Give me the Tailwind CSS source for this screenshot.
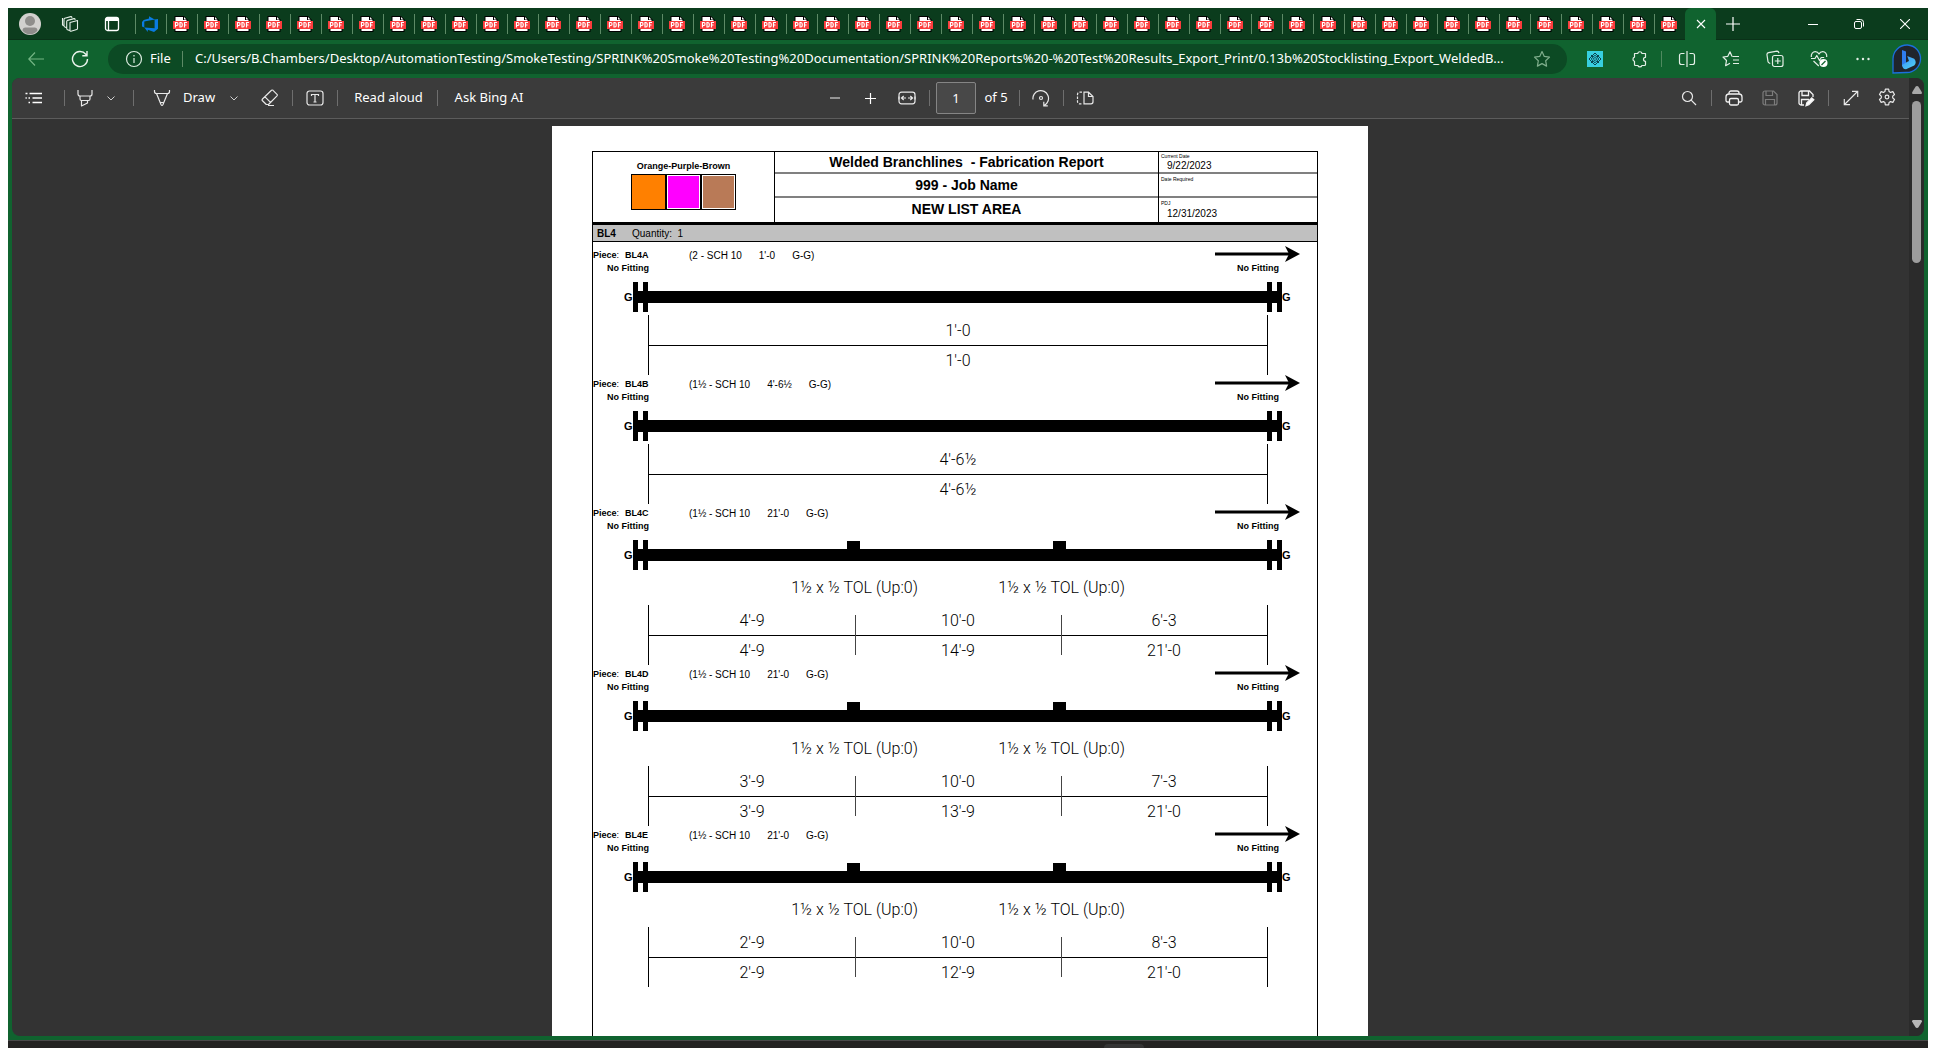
<!DOCTYPE html>
<html lang="en">
<head>
<meta charset="utf-8">
<title>Stocklisting_Export_Welded</title>
<script src="https://cdn.jsdelivr.net/npm/@tailwindcss/browser@4"></script>
</head>
<body class="bg-white font-['Noto_Sans',sans-serif] text-white">
<div class="flex h-screen flex-col overflow-hidden px-2 pt-2">

  <!-- Tab strip -->
  <header class="flex h-8 shrink-0 items-stretch border-b border-[#0a3118] bg-[#0b3c1d]">
    <div class="flex w-[127px] shrink-0 items-center pl-[11px]">
      <button aria-label="Profile" class="w-[22px]">
        <svg viewBox="0 0 22 22" class="size-[22px]"><circle cx="11" cy="11" r="11" fill="#d2d0ce"/><circle cx="11" cy="8" r="5" fill="#8f8d8b"/><path d="M3.5 17.5c0-2 1.200-3 3-3h9c1.800 0 3 1 3 3-1.500 2.200-4.200 3.800-7.500 3.800s-6-1.600-7.500-3.800z" fill="#8f8d8b"/></svg>
      </button>
      <button aria-label="Workspaces" class="ml-5 w-[18px]">
        <svg viewBox="0 0 18 18" class="size-[18px]" fill="none" stroke="#e4efe7" stroke-width="1.100" stroke-linejoin="round"><path d="M9 7.500l7.500-2v8q0 .8-.8 1L10 16.200q-1 .3-1-.8zM8.500 15.500l-2-.8q-.8-.3-.8-1.200V6.500q0-.8.8-1.100L13 3.600q1-.2 1 .8v.6M5.200 12.500L3.800 12q-.8-.3-.8-1.200V4.300q0-.7.800-1l6-1.700q1-.2 1 .7v.8M2.500 10.500l-1-.5V3"/></svg>
      </button>
      <button aria-label="Tab actions" class="ml-[25px] w-4">
        <svg viewBox="0 0 16 16" class="size-4" fill="none" stroke="#fff" stroke-width="1.300"><rect x="1.500" y="1.500" width="13" height="13" rx="2"/><path d="M2 3.500h12" stroke-width="3"/><path d="M4.500 4v10"/></svg>
      </button>
    </div>
    <nav id="tabs" aria-label="Open tabs" class="flex min-w-0 items-stretch">
      <button aria-label="Azure DevOps" class="flex w-[31px] min-w-0 items-center pr-[2px]">
        <span class="h-5 w-px shrink-0 bg-[#5d8a66]"></span>
        <svg viewBox="0 0 16 16" class="mx-auto size-4" fill="#0a7be0"><path d="M16 3v9.800l-4 3.200-6.200-2.200V16l-3.500-4.500 10.300.8V3.600zM12.700 3.600L7 .2v2.200L1.700 3.900 0 6v4.600l2.300 1V5.500z"/></svg>
      </button>
    </nav>
    <div class="flex w-[31px] shrink-0 items-center justify-center rounded-t-md bg-[#10632f] -mb-px">
      <button aria-label="Close tab"><svg viewBox="0 0 10 10" class="size-[10px]" fill="none" stroke="#fff" stroke-width="1.100"><path d="M1 1l8 8M9 1L1 9"/></svg></button>
    </div>
    <button aria-label="New tab" class="ml-[10px] w-[14px]"><svg viewBox="0 0 14 14" class="size-[14px]" stroke="#fff" stroke-width="1.200"><path d="M7 0v14M0 7h14"/></svg></button>
    <div class="ml-auto flex items-stretch">
      <button aria-label="Minimize" class="flex w-[46px] items-center justify-center"><svg viewBox="0 0 10 10" class="size-[10px]" stroke="#fff"><path d="M0 5.500h10"/></svg></button>
      <button aria-label="Restore" class="flex w-[46px] items-center justify-center"><svg viewBox="0 0 10 10" class="size-[10px]" fill="none" stroke="#fff"><rect x=".5" y="2.500" width="7" height="7" rx="1.500"/><path d="M2.500.5h4a3 3 0 0 1 3 3v4"/></svg></button>
      <button aria-label="Close" class="flex w-[46px] items-center justify-center"><svg viewBox="0 0 10 10" class="size-[10px]" fill="none" stroke="#fff" stroke-width="1.100"><path d="M0 0l10 10M10 0L0 10"/></svg></button>
    </div>
  </header>

  <!-- Address bar -->
  <div class="flex h-[38px] shrink-0 items-center bg-[#10632f] pl-[6px]">
    <button aria-label="Back" class="flex w-11 justify-center"><svg viewBox="0 0 16 14" class="h-[14px] w-4" fill="none" stroke="#74b584" stroke-width="1.200"><path d="M16 7H1M7 .5L.8 7 7 13.500"/></svg></button>
    <button aria-label="Refresh" class="flex w-11 justify-center"><svg viewBox="0 0 18 18" class="size-[18px]" fill="none" stroke="#e9f3ec" stroke-width="1.400"><path d="M16.500 9A7.500 7.500 0 1 1 14.800 4.300L16 5.500M16 1v4.700h-4.700"/></svg></button>
    <div class="ml-[6px] flex h-[30px] min-w-0 flex-1 items-center rounded-full bg-[#0c4a24] pl-[17px] pr-[7px] text-[13px]">
      <svg viewBox="0 0 18 18" class="size-[18px] shrink-0" fill="none" stroke="#dcebe0" stroke-width="1.200"><circle cx="9" cy="9" r="7.500"/><path d="M9 8v5M9 5v1.500"/></svg>
      <label for="url" class="ml-[7px] w-8">File</label>
      <span class="h-4 w-px bg-[#5d8a66]"></span>
      <input id="url" class="ml-3 min-w-0 flex-1 bg-transparent outline-none" value="C:/Users/B.Chambers/Desktop/AutomationTesting/SmokeTesting/SPRINK%20Smoke%20Testing%20Documentation/SPRINK%20Reports%20-%20Test%20Results_Export_Print/0.13b%20Stocklisting_Export_WeldedB...">
      <button aria-label="Add to favorites" class="flex w-9 shrink-0 justify-center"><svg viewBox="0 0 18 18" class="size-[18px]" fill="none" stroke="#7fae8c" stroke-width="1.200" stroke-linejoin="round"><path d="M9 1.500l2.300 4.900 5.200.7-3.800 3.700.9 5.300L9 13.600l-4.600 2.500.9-5.300L1.500 7.100l5.200-.7z"/></svg></button>
    </div>
    <div class="ml-[6px] flex shrink-0 items-center">
      <button aria-label="Extension" class="flex w-11 justify-center"><svg viewBox="0 0 16 16" class="size-4"><path d="M0 0h16v16H0z" fill="#38cfe0"/><g fill="none" stroke="#0b4350" stroke-width="1"><path d="M8 2L14 8 8 14 2 8z"/><path d="M8 4.200L11.800 8 8 11.800 4.200 8zM8 6.300L9.700 8 8 9.700 6.300 8zM4 4l2 2M12 4l-2 2M4 12l2-2M12 12l-2-2"/></g></svg></button>
      <button aria-label="Extensions" class="flex w-11 justify-center"><svg viewBox="0 0 18 18" class="size-[18px]" fill="none" stroke="#e4efe7" stroke-width="1.200" stroke-linejoin="round"><path d="M4.500 3.500h3.200a2.200 2.200 0 0 1 4.300 0h3.500v3.800a2 2 0 0 0 0 4v3.200q0 1-1 1h-2.600a2.100 2.100 0 0 1-4 0H5.500q-1 0-1-1v-3.200a2.200 2.200 0 0 1 0-4.200z"/></svg></button>
      <span class="mr-[3px] h-4 w-px bg-[#4f8a5f]"></span>
      <button aria-label="Split screen" class="flex w-11 justify-center"><svg viewBox="0 0 18 18" class="size-[18px]" fill="none" stroke="#e4efe7" stroke-width="1.200"><path d="M6.500 3.500h-3a2 2 0 0 0-2 2v7a2 2 0 0 0 2 2h3M11.500 3.500h3a2 2 0 0 1 2 2v7a2 2 0 0 1-2 2h-3M9 1v16"/></svg></button>
      <button aria-label="Favorites" class="flex w-11 justify-center"><svg viewBox="0 0 18 18" class="size-[18px]" fill="none" stroke="#e4efe7" stroke-width="1.200" stroke-linejoin="round"><path d="M10 6.500L8 1.800 5.800 6.300 1 7l3.500 3.500-.9 5.200L8 13.300M10.500 6.500H17M11 10h6M11 13.500h6"/></svg></button>
      <button aria-label="Collections" class="flex w-11 justify-center"><svg viewBox="0 0 18 18" class="size-[18px]" fill="none" stroke="#e4efe7" stroke-width="1.200"><rect x="6.500" y="5.500" width="10.500" height="11" rx="2"/><path d="M11.800 8v6M8.800 11h6M4.300 13.500L3.200 13a2 2 0 0 1-1.200-1.400L1 5a2 2 0 0 1 1.600-2.300L11 1.200q1.500 0 2 2"/></svg></button>
      <button aria-label="Browser essentials" class="flex w-11 justify-center"><svg viewBox="0 0 18 18" class="size-[18px]" fill="none" stroke="#e4efe7" stroke-width="1.200" stroke-linejoin="round"><path d="M1.300 7C.8 3.500 3 1.700 5.300 1.700 7 1.700 8.300 2.600 9 4c.7-1.400 2-2.300 3.700-2.300 2.300 0 4.500 1.800 4 5.300M1 8.500h4L6.800 5.500l2.700 5 1.700-3h3M3.500 11l5.300 5"/><circle cx="13.500" cy="13" r="4" fill="#fff" stroke="none"/><path d="M11.500 15l4-4" stroke="#10632f"/></svg></button>
      <button aria-label="Settings and more" class="flex w-11 justify-center"><svg viewBox="0 0 14 4" class="h-1 w-[14px]" fill="#e4efe7"><circle cx="1.500" cy="2" r="1.200"/><circle cx="7" cy="2" r="1.200"/><circle cx="12.500" cy="2" r="1.200"/></svg></button>
      <button aria-label="Bing" class="flex w-[43px] justify-center"><svg viewBox="0 0 30 30" class="size-[30px]"><defs><linearGradient id="b" x1="0" y1="0" x2="1" y2="1"><stop offset="0" stop-color="#3a8bf5"/><stop offset="1" stop-color="#4fd7f5"/></linearGradient></defs><path d="M15.500 1a13.500 13.500 0 1 1-1.500 27.500L1 29V15A14 14 0 0 1 15.500 1z" fill="#20242c" stroke="#1b6fdc" stroke-width="1.300"/><path d="M10 6l4 1.500v12l-4 3z" fill="#2f7df0"/><path d="M10 21l5-3 2-1-1.800-5 7 2.700q3 3.500 0 6.800L14 25.200q-3.500 0-4-4.200z" fill="url(#b)"/></svg></button>
    </div>
  </div>

  <!-- PDF viewer -->
  <div class="flex min-h-0 flex-1 bg-[#10632f] px-1 pb-1">
    <div class="flex min-w-0 flex-1 overflow-hidden rounded-lg bg-[#333]">
      <div class="flex min-w-0 flex-1 flex-col">
        <div class="grid h-[41px] shrink-0 grid-cols-[1fr_auto_1fr] items-center border-b border-[#5c5c5c] bg-[#3b3b3b] text-[13px]">
          <div class="flex items-center">
            <button aria-label="Contents" class="flex w-11 justify-center"><svg viewBox="0 0 18 18" class="size-[18px]" stroke="#fff" stroke-width="1.300"><path d="M4.500 4.500H17M7.500 9H17M7.500 13.500H17M.5 4.500h2M.5 9h1.300M3.500 9h1.500M3.500 13.500h1.500"/></svg></button>
            <span class="flex w-4 justify-center"><i class="h-4 w-px bg-[#6e6e6e]"></i></span>
            <button aria-label="Highlight" class="flex w-[26px] justify-center"><svg viewBox="0 0 18 18" class="size-[18px]" fill="none" stroke="#e8e8e8" stroke-width="1.200" stroke-linejoin="round"><path d="M2 1v4q0 2 2 2h10q2 0 2-2V1M4 7v3q0 1.500 1.500 1.500h7q1.500 0 1.500-1.500V7M5.500 11.500V17l6-3v-2.500"/></svg></button>
            <button aria-label="Highlight colors" class="flex w-[26px] justify-center"><svg viewBox="0 0 8 5" class="h-[5px] w-2" fill="none" stroke="#cfcfcf"><path d="M.5.5L4 4 7.500.5"/></svg></button>
            <span class="flex w-[18px] justify-center"><i class="h-4 w-px bg-[#6e6e6e]"></i></span>
            <button class="flex w-20 items-center gap-3 pl-[11px]"><svg viewBox="0 0 18 18" class="size-[18px] shrink-0" fill="none" stroke="#e8e8e8" stroke-width="1.200" stroke-linejoin="round"><path d="M1.500 1v1.500q0 2 2 2h11q2 0 2-2V1M3.500 4.500L8 15.500q1 2 2 0l4.500-11M7.300 13.500h3.400"/></svg>Draw</button>
            <button aria-label="Draw options" class="flex w-6 justify-center"><svg viewBox="0 0 8 5" class="h-[5px] w-2" fill="none" stroke="#cfcfcf"><path d="M.5.5L4 4 7.500.5"/></svg></button>
            <button aria-label="Erase" class="ml-[10px] flex w-7 justify-center"><svg viewBox="0 0 18 18" class="size-[18px]" fill="none" stroke="#e8e8e8" stroke-width="1.200" stroke-linejoin="round"><path d="M1.500 10L10.500 1.300q.8-.6 1.500 0L16 5.300q.7.700 0 1.500L7.500 15.500H5.300L1.500 11.800q-.8-.9 0-1.800zM4 7.800l6 6M7 16.500h6"/></svg></button>
            <span class="flex w-4 justify-center"><i class="h-4 w-px bg-[#6e6e6e]"></i></span>
            <button aria-label="Add text" class="flex w-[30px] justify-center"><svg viewBox="0 0 18 18" class="size-[18px]" fill="none" stroke="#e8e8e8" stroke-width="1.200"><rect x="1" y="2" width="16" height="14" rx="2.500"/><path d="M5.500 7V5.500h7V7M9 5.500v7.500M7.500 13h3"/></svg></button>
            <span class="flex w-[14px] justify-center"><i class="h-4 w-px bg-[#6e6e6e]"></i></span>
            <button class="w-[89px] text-center whitespace-nowrap">Read aloud</button>
            <span class="flex w-2 justify-center"><i class="h-4 w-px bg-[#6e6e6e]"></i></span>
            <button class="w-24 text-center whitespace-nowrap">Ask Bing AI</button>
          </div>
          <div class="flex items-center">
            <button aria-label="Zoom out" class="flex w-9 justify-center"><svg viewBox="0 0 10 10" class="size-[10px]" stroke="#b5b5b5" stroke-width="1.500"><path d="M0 5h10"/></svg></button>
            <button aria-label="Zoom in" class="flex w-9 justify-center"><svg viewBox="0 0 12 12" class="size-3" stroke="#fff" stroke-width="1.200"><path d="M0 6.500h11M5.500 1v11"/></svg></button>
            <button aria-label="Fit to width" class="flex w-9 justify-center"><svg viewBox="0 0 18 14" class="h-[14px] w-[18px]" fill="none" stroke="#e8e8e8" stroke-width="1.200"><rect x="1" y="1.200" width="16" height="11.600" rx="2.500"/><path d="M3.500 7H8M10 7h4.500M5.700 5L3.500 7l2.200 2M12.300 5l2.200 2-2.200 2M1 5.500v3M17 5.500v3"/></svg></button>
            <span class="mr-[3px] flex w-2 justify-center"><i class="h-4 w-px bg-[#6e6e6e]"></i></span>
            <input aria-label="Page number" value="1" class="h-8 w-10 rounded-[2px] border border-[#858585] bg-[#484848] text-center text-[13px] outline-none">
            <span class="w-10 text-center">of 5</span>
            <span class="flex w-[6px] justify-center"><i class="h-4 w-px bg-[#6e6e6e]"></i></span>
            <button aria-label="Rotate" class="flex w-[38px] justify-center"><svg viewBox="0 0 18 18" class="size-[18px]" fill="none" stroke="#e8e8e8" stroke-width="1.200"><path d="M1 10.500A7.800 7.800 0 1 1 12.500 16.200M15.800 16.800h-4V12.800"/><circle cx="9" cy="9" r="1.500"/></svg></button>
            <span class="flex w-[6px] justify-center"><i class="h-4 w-px bg-[#6e6e6e]"></i></span>
            <button aria-label="Page view" class="flex w-[38px] justify-center"><svg viewBox="0 0 18 14" class="h-[14px] w-[18px]" fill="none" stroke="#e8e8e8" stroke-width="1.200"><path d="M6 1.200H3.500a2 2 0 0 0-2 2v7.600a2 2 0 0 0 2 2H6" stroke-dasharray="2.500 1.300"/><path d="M8 1.200h4.500L17 5.500v5.300a2 2 0 0 1-2 2H8zM12.500 1.200v4.300H17"/></svg></button>
          </div>
          <div class="flex items-center justify-end pr-1">
            <button aria-label="Search" class="flex w-9 justify-center"><svg viewBox="0 0 16 16" class="size-4" fill="none" stroke="#e8e8e8" stroke-width="1.200"><circle cx="6.500" cy="6.500" r="5"/><path d="M10.200 10.200L15 15"/></svg></button>
            <span class="flex w-[9px] justify-center"><i class="h-4 w-px bg-[#6e6e6e]"></i></span>
            <button aria-label="Print" class="flex w-9 justify-center"><svg viewBox="0 0 18 18" class="size-[18px]" fill="none" stroke="#f2f2f2" stroke-width="1.300"><path d="M4 5V4a2 2 0 0 1 2-2h6a2 2 0 0 1 2 2v1M4 13H2.500a1.500 1.500 0 0 1-1.500-1.500V8a3 3 0 0 1 3-3h10a3 3 0 0 1 3 3v3.500a1.500 1.500 0 0 1-1.500 1.500H14"/><rect x="4.500" y="9.500" width="9" height="6.500" rx="1.500"/></svg></button>
            <button aria-label="Save" class="flex w-9 justify-center"><svg viewBox="0 0 18 18" class="size-[18px]" fill="none" stroke="#7c7c7c" stroke-width="1.200"><path d="M4 2h8.500L16 5.500V14a2 2 0 0 1-2 2H4a2 2 0 0 1-2-2V4a2 2 0 0 1 2-2zM5 2v4.500h6.500V2M4.500 16v-5.500h9V16"/></svg></button>
            <button aria-label="Save as" class="flex w-9 justify-center"><svg viewBox="0 0 18 18" class="size-[18px]" fill="none" stroke="#f2f2f2" stroke-width="1.300"><path d="M7 16H4a2 2 0 0 1-2-2V4a2 2 0 0 1 2-2h8.500L16 5.500V8M5 2v4.500h6.500V2M4.500 16v-5.500H12"/><path d="M9 16.800l.8-3 5-5 2 2-5 5z" fill="#fff"/></svg></button>
            <span class="flex w-[9px] justify-center"><i class="h-4 w-px bg-[#6e6e6e]"></i></span>
            <button aria-label="Full screen" class="flex w-9 justify-center"><svg viewBox="0 0 16 16" class="size-4" fill="none" stroke="#e8e8e8" stroke-width="1.200"><path d="M1.500 14.500l13-13M9 1.300h5.700V7M1.300 9v5.700H7"/></svg></button>
            <button aria-label="Settings" class="flex w-9 justify-center"><svg viewBox="0 0 24 24" class="-mt-[2px] size-[18px]" fill="none" stroke="#e8e8e8" stroke-width="1.600" stroke-linejoin="round"><path d="M9.800 1.500h4.400l.6 3.300 1.900 1.100 3.100-1.100 2.200 3.800-2.400 2.200v2.400l2.400 2.200-2.200 3.800-3.100-1.100-1.900 1.100-.6 3.300H9.800l-.6-3.300-1.900-1.100-3.100 1.100L2 15.400l2.400-2.200v-2.400L2 8.600l2.200-3.800 3.100 1.100 1.900-1.100z"/><circle cx="12" cy="12" r="2.500"/></svg></button>
          </div>
        </div>

        <!-- Document area -->
        <main class="flex min-h-0 flex-1 justify-center overflow-hidden pt-[7px] pr-px">
          <article class="w-[816px] shrink-0 bg-white pt-[25px] pr-[50px] pl-10 font-['Liberation_Sans',Arial,sans-serif] text-black">
            <div class="h-[1000px] border border-black">
              <div class="grid h-[73px] grid-cols-[181px_384px_1fr] border-b-3 border-black">
                <section class="flex flex-col items-center pt-2">
                  <h2 class="text-[9px] leading-3 font-bold">Orange-Purple-Brown</h2>
                  <div class="mt-[2px] flex border-l border-black">
                    <span class="h-9 w-[35px] border-y border-r-2 border-black bg-[#ff8000]"></span>
                    <span class="h-9 w-[35px] border-y border-r-2 border-black bg-white p-px"><i class="block size-full bg-[#ff00ff]"></i></span>
                    <span class="h-9 w-[34px] border-y border-r border-black bg-white p-px"><i class="block size-full bg-[#b97a57]"></i></span>
                  </div>
                </section>
                <section class="grid grid-rows-[22px_24px_1fr] border-l border-black text-center text-sm font-bold">
                  <h1 class="border-b-2 border-[#808080] leading-5 whitespace-pre">Welded Branchlines  - Fabrication Report</h1>
                  <p class="border-b-2 border-[#808080] leading-[22px]">999 - Job Name</p>
                  <p class="leading-[22px]">NEW LIST AREA</p>
                </section>
                <dl class="grid grid-rows-[22px_24px_1fr] border-l border-black text-[10px]">
                  <div class="border-b-2 border-[#808080] pl-[2px]"><dt class="pt-px text-[5px] leading-[6px]">Current Date</dt><dd class="pl-[6px] leading-[14px]">9/22/2023</dd></div>
                  <div class="border-b-2 border-[#808080] pl-[2px]"><dt class="pt-[2px] text-[5px] leading-[6px]">Date Required</dt></div>
                  <div class="pl-[2px]"><dt class="pt-[2px] text-[5px] leading-[6px]">PDJ</dt><dd class="pl-[6px] leading-4">12/31/2023</dd></div>
                </dl>
              </div>
              <div class="flex h-[17px] items-center border-b border-black bg-[#c0c0c0] pt-px pl-1 text-[10px]">
                <span class="w-[35px] font-bold">BL4</span><span class="whitespace-pre">Quantity:  1</span>
              </div>
              <div id="pieces"></div>
            </div>
          </article>
        </main>
      </div>

      <!-- Scrollbar -->
      <div class="flex w-[15px] shrink-0 flex-col items-center bg-[#2b2b2b] py-2">
        <svg viewBox="0 0 10 8" class="h-2 w-[10px]" fill="#a8a8a8"><path d="M5 0q1 0 1.500.8L10 6.500Q10 8 9 8H1Q0 8 0 6.500L3.500.8Q4 0 5 0z"/></svg>
        <span class="mt-[7px] h-[162px] w-[9px] rounded-full bg-[#9d9d9d]"></span>
        <svg viewBox="0 0 10 8" class="mt-auto h-2 w-[10px]" fill="#b8b8b8"><path d="M5 8q1 0 1.500-.8L10 1.500Q10 0 9 0H1Q0 0 0 1.500l3.500 5.700Q4 8 5 8z"/></svg>
      </div>
    </div>
  </div>

  <!-- Desktop taskbar edge -->
  <footer class="flex h-2 shrink-0 items-end border-t border-[#4a4a4a] bg-[#242322] pl-[57%]"><span class="ml-[2px] h-1 w-10 rounded-t bg-[#343434]"></span></footer>
</div>

<template id="pdf-tab">
  <button aria-label="PDF document" class="flex w-[31px] min-w-0 items-center pr-[2px]">
    <span class="h-5 w-px shrink-0 bg-[#5d8a66]"></span>
    <svg viewBox="0 0 16 16" class="mx-auto size-4"><path d="M1.500 0H11l3.500 3.500V16h-13z" fill="#000"/><path d="M2.500 1H10v3h3.500v11h-11z" fill="#fff"/><path d="M11 1l2.500 2.500H11z" fill="#fff"/><path d="M0 5h16v8H0z" fill="#fb3c3c"/><path d="M2.500 11.500v-5h1.500q1 0 1 1.500t-1 1.500H2.500M7 6.500v4.500h1q1.300 0 1.300-2.200T8 6.500zM11.500 11.500v-5H14M11.500 9h2" fill="none" stroke="#fff" stroke-width="1.200"/></svg>
  </button>
</template>

<script>
  const tabs = document.getElementById('tabs');
  const tab = document.getElementById('pdf-tab');
  for (let i = 0; i < 49; i++) tabs.append(tab.content.cloneNode(true));

  const pieces = [
    { id: 'BL4A', size: '2', len: "1'-0", seg: [["1'-0", "1'-0"]] },
    { id: 'BL4B', size: '1½', len: "4'-6½", seg: [["4'-6½", "4'-6½"]] },
    { id: 'BL4C', size: '1½', len: "21'-0", seg: [["4'-9", "4'-9"], ["10'-0", "14'-9"], ["6'-3", "21'-0"]] },
    { id: 'BL4D', size: '1½', len: "21'-0", seg: [["3'-9", "3'-9"], ["10'-0", "13'-9"], ["7'-3", "21'-0"]] },
    { id: 'BL4E', size: '1½', len: "21'-0", seg: [["2'-9", "2'-9"], ["10'-0", "12'-9"], ["8'-3", "21'-0"]] },
  ];

  document.getElementById('pieces').innerHTML = pieces.map(p => {
    const multi = p.seg.length > 1;
    const outlets = multi ? '<path d="M214 1h13v8h-13zM420 1h13v8h-13z"/>' : '';
    const tol = multi
      ? `<div class="ml-[55px] mr-[49px] grid h-[35px] grid-cols-2 items-center px-[103px] text-center font-['Roboto',sans-serif] text-base font-light"><span>1½ x ½ TOL (Up:0)</span><span>1½ x ½ TOL (Up:0)</span></div>`
      : '<div class="h-[3px]"></div>';
    const cells = p.seg.map((s, i) => `
      <div class="relative flex-1">
        <div class="h-[31px] border-b border-black leading-[31px]">${s[0]}</div>
        <div class="h-[29px] leading-[29px]">${s[1]}</div>
        ${i ? '<i class="absolute top-[10px] left-0 h-10 w-px bg-[#444]"></i>' : ''}
      </div>`).join('');
    return `
    <section>
      <div class="flex h-10 justify-between pt-[7px] text-[9px] leading-[13px]">
        <div>
          <div class="flex">
            <h3 class="flex w-24 font-bold"><span class="w-8">Piece<span class="font-normal">:</span></span>${p.id}</h3>
            <p class="flex gap-[17px] whitespace-nowrap text-[10px]"><span>(${p.size} - SCH 10</span><span>${p.len}</span><span>G-G)</span></p>
          </div>
          <p class="pl-[14px] font-bold">No Fitting</p>
        </div>
        <div class="mr-4 w-[86px]">
          <svg viewBox="0 0 86 16" class="-mt-[3px] h-4 w-[86px]"><path d="M0 6.500h74v3H0z"/><path d="M70 0L85 8l-15 8 4-8z"/></svg>
          <p class="pl-[22px] font-bold">No Fitting</p>
        </div>
      </div>
      <div class="flex h-[30px] items-center pl-[31px] pr-[26px] text-[11px] font-bold">
        <span class="w-[9px]">G</span>
        <svg viewBox="0 0 649 30" class="h-[30px] min-w-0 flex-1 overflow-visible"><path d="M0 0h5v30H0zM10 0h5v30h-5zM634 0h5v30h-5zM644 0h5v30h-5zM0 9h649v12H0z"/>${outlets}</svg>
        <span class="w-[9px]">G</span>
      </div>
      ${tol}
      <div class="-mb-1 ml-[55px] mr-[49px] flex h-[60px] border-x border-black text-center font-['Roboto',sans-serif] text-base font-light">${cells}</div>
    </section>`;
  }).join('');
</script>
</body>
</html>
